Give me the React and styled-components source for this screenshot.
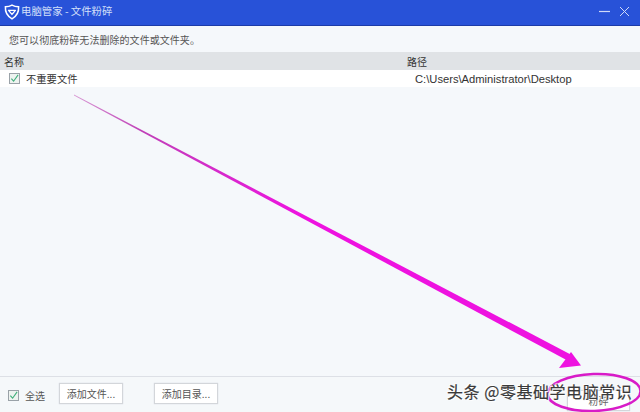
import React from "react";
import styled, { createGlobalStyle } from "styled-components";

const Global = createGlobalStyle`
  html, body { margin: 0; padding: 0; width: 640px; height: 412px; overflow: hidden; background: #f5f8fb; }
  * { box-sizing: border-box; }
  body { font-family: "Noto Sans CJK SC", "Liberation Sans", sans-serif; }
`;
const Win = styled.div`
  position: relative; width: 640px; height: 412px; display: flex; flex-direction: column;
  background: #f5f8fb; color: #333; font-size: 10px; overflow: hidden;
`;
const TitleBar = styled.div`
  height: 26px; flex: none; background: #2852d8; border-bottom: 1px solid #1c3ba8;
  display: flex; align-items: center; padding: 0 10px 2px 4px; color: #d5e0fa; font-size: 10.4px; gap: 1px;
`;
const TitleText = styled.span`flex: 1; line-height: 1;`;
const WinBtns = styled.div`display: flex; gap: 9px; align-items: center;`;
const Hint = styled.div`
  height: 26px; flex: none; display: flex; align-items: center; padding: 0 0 0 9px; color: #555; font-size: 10px; letter-spacing: .05px;
`;
const HeaderRow = styled.div`
  height: 18px; flex: none; background: #e0e3e6; display: grid; grid-template-columns: 403px 1fr;
  align-items: center; padding-left: 4px; color: #333; font-size: 10px;
`;
const FileRow = styled.div`
  height: 17px; flex: none; background: #fff; display: grid; grid-template-columns: 415px 1fr; align-items: center;
`;
const NameCell = styled.div`display: flex; align-items: center; gap: 6px; padding-left: 9px; color: #333; font-size: 10.3px;`;
const PathCell = styled.div`font-family: "Liberation Sans", sans-serif; font-size: 11.2px; color: #333;`;
const Body = styled.div`flex: 1;`;
const Footer = styled.div`
  height: 36px; flex: none; border-top: 1px solid #dde0e6; background: #f5f8fa; display: flex; align-items: center; padding: 0 0 2px 8px;
`;
const Check = styled.span`
  width: 11px; height: 11px; flex: none; border: 1px solid #9aa2a8; background: #eef3f0; display: inline-flex; align-items: center; justify-content: center;
`;
const SelectAll = styled.div`display: flex; align-items: center; gap: 6px; font-size: 10px; color: #555; width: 51px; padding-top: 4px;`;
const Btn = styled.div`
  width: ${p => p.$w}px; height: 21px; margin-right: ${p => p.$mr || 0}px; border: 1px solid #d3d6da; background: #fff;
  display: flex; align-items: center; justify-content: center; font-size: 10px; color: #555; box-shadow: 0 0 1px #ccd;
`;
const Shred = styled(Btn)`position: absolute; left: 567px; top: 390px; color: #666;`;
const Overlay = styled.svg`position: absolute; inset: 0; width: 640px; height: 412px; pointer-events: none;`;
const Watermark = styled.div`
  position: absolute; left: 447px; top: 381px; font-size: 16px; line-height: 20px; letter-spacing: .55px; color: #3a3a3a; white-space: nowrap;
  -webkit-text-stroke: 0.2px #3a3a3a;
  text-shadow: 0 0 2px #fff, 0 0 2px #fff, 1px 1px 1px #fff, -1px -1px 1px #fff;
`;

const Tick = () => (
  <svg width="9" height="9" viewBox="0 0 10 10"><path d="M1.5 5.2 L4 8 L9 1" fill="none" stroke="#3fae7a" strokeWidth="1.2" /></svg>
);

export default function App() {
  return (
    <Win>
      <Global />
      <TitleBar>
        <svg width="16" height="16" viewBox="0 0 16 16">
          <path d="M8 1.2 C10.5 2.6 12.5 2.8 14.6 2.8 C15 8.5 12 12.6 8 14.8 C4 12.6 1 8.5 1.4 2.8 C3.5 2.8 5.5 2.6 8 1.2Z" fill="none" stroke="#fff" strokeWidth="1.5" />
          <path d="M4.6 6.4 H11.4 L8 10.4Z" fill="none" stroke="#fff" strokeWidth="1.4" strokeLinejoin="round" />
        </svg>
        <TitleText>电脑管家 - 文件粉碎</TitleText>
        <WinBtns>
          <svg width="11" height="11" viewBox="0 0 11 11"><path d="M0 5.5H11" stroke="#cfdaf8" strokeWidth="1.2" /></svg>
          <svg width="11" height="11" viewBox="0 0 11 11"><path d="M1 1L10 10M10 1L1 10" stroke="#cfdaf8" strokeWidth="1" /></svg>
        </WinBtns>
      </TitleBar>
      <Hint>您可以彻底粉碎无法删除的文件或文件夹。</Hint>
      <HeaderRow><span>名称</span><span>路径</span></HeaderRow>
      <FileRow>
        <NameCell><Check><Tick /></Check>不重要文件</NameCell>
        <PathCell>C:\Users\Administrator\Desktop</PathCell>
      </FileRow>
      <Body />
      <Footer>
        <SelectAll><Check><Tick /></Check>全选</SelectAll>
        <Btn $w={64} $mr={31}>添加文件...</Btn>
        <Btn $w={64}>添加目录...</Btn>
      </Footer>
      <Shred $w={63}>粉碎</Shred>
      <Overlay viewBox="0 0 640 412">
        <defs>
          <linearGradient id="shaft" gradientUnits="userSpaceOnUse" x1="74" y1="95" x2="300" y2="215">
            <stop offset="0" stopColor="#d89ad4" />
            <stop offset="0.3" stopColor="#c040b8" />
            <stop offset="1" stopColor="#ee12e0" />
          </linearGradient>
        </defs>
        <polygon points="74,94.5 571.6,354.9 568.4,361.1 74,95.5" fill="url(#shaft)" />
        <polygon points="581,365.5 571,352 559,368" fill="#ee12e0" />
        <ellipse cx="594" cy="392.5" rx="46.5" ry="18.5" fill="none" stroke="#d81bc8" strokeWidth="2.5" transform="rotate(-2 594 392.5)" />
      </Overlay>
      <Watermark>头条 @零基础学电脑常识</Watermark>
    </Win>
  );
}
